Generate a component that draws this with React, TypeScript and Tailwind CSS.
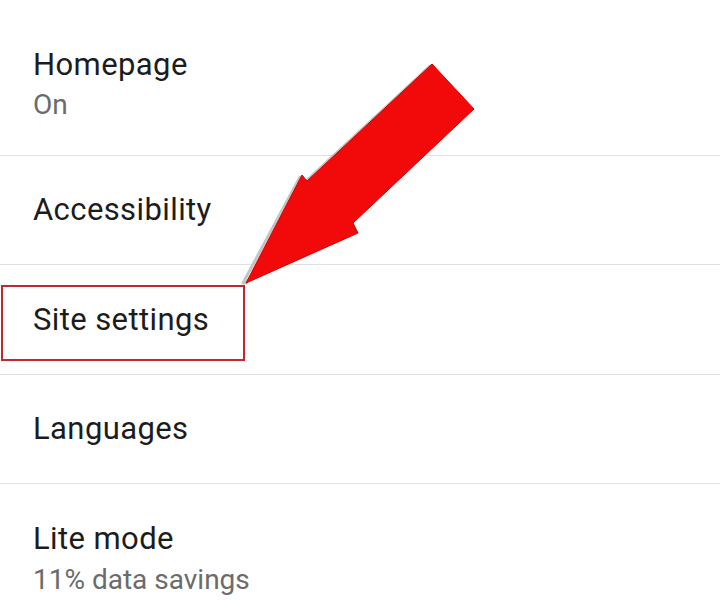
import React from 'react';

type Row = { title: string; subtitle?: string; rowClass: string; subClass?: string };

const rows: Row[] = [
  { title: 'Homepage', subtitle: 'On', rowClass: 'h-[156px] pt-[47px]', subClass: 'mt-[6px]' },
  { title: 'Accessibility', rowClass: 'h-[109px] justify-center' },
  { title: 'Site settings', rowClass: 'h-[110px] justify-center' },
  { title: 'Languages', rowClass: 'h-[109px] justify-center' },
  {
    title: 'Lite mode',
    subtitle: '11% data savings',
    rowClass: 'h-[116px] pt-[37px]',
    subClass: 'mt-[7px]',
  },
];

function Arrow() {
  return (
    <svg
      className="absolute left-0 top-0 pointer-events-none"
      width="720"
      height="600"
      viewBox="0 0 720 600"
    >
      {/* soft grey shadow on the upper-left edges */}
      <polygon
        points="430,66 305,182 300,177 243,283 246,283"
        fill="none"
        stroke="#c4c4c4"
        strokeWidth="3"
        strokeLinejoin="round"
      />
      <polygon
        points="432,64 474,109 353,223 358,233 246,283 302,175 307,181"
        fill="#f20a0a"
        stroke="#d40000"
        strokeWidth="1"
        strokeLinejoin="round"
      />
    </svg>
  );
}

export default function App() {
  return (
    <div
      className="relative w-[720px] h-[600px] overflow-hidden bg-white"
      style={{ fontFamily: 'Roboto, "Noto Sans", sans-serif' }}
    >
      <div className="flex flex-col">
        {rows.map((row, i) => (
          <div
            key={row.title}
            className={`flex flex-col pl-[33px] ${row.rowClass} ${
              i < rows.length - 1 ? 'border-b border-[#e0e0e0]' : ''
            }`}
          >
            <span className="text-[31px] leading-[36px] tracking-[0.4px] text-[#1c1c1c]">
              {row.title}
            </span>
            {row.subtitle && (
              <span className={`${row.subClass} text-[28px] leading-[32px] text-[#6b6b6b]`}>
                {row.subtitle}
              </span>
            )}
          </div>
        ))}
      </div>

      {/* highlight box around "Site settings" */}
      <div className="absolute left-[1px] top-[285px] w-[244px] h-[76px] border-2 border-[#c2272d]" />

      <Arrow />
    </div>
  );
}
